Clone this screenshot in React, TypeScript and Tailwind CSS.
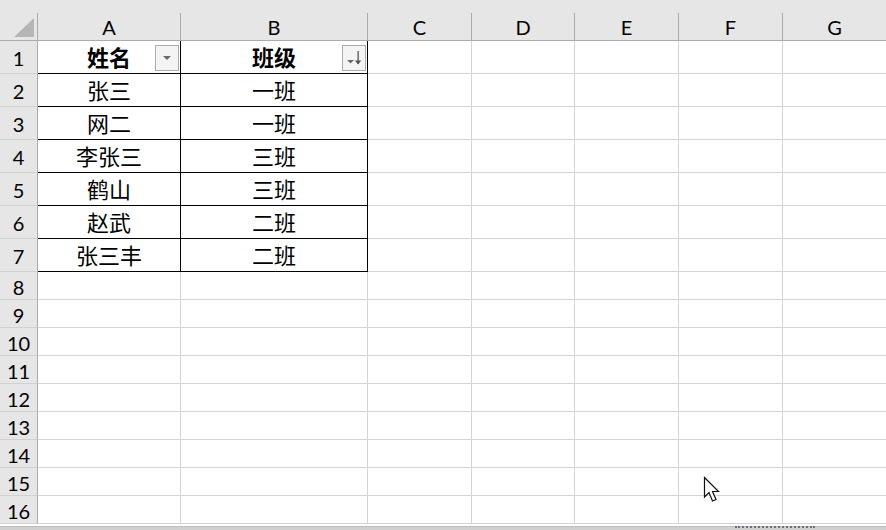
import React from "react";

const colW = ["w-[143px]", "w-[187px]", "w-[104px]", "w-[103px]", "w-[104px]", "w-[104px]", "flex-1"];
const letters = ["A", "B", "C", "D", "E", "F", "G"];

const data: [string, string][] = [
  ["张三", "一班"],
  ["网二", "一班"],
  ["李张三", "三班"],
  ["鹤山", "三班"],
  ["赵武", "二班"],
  ["张三丰", "二班"],
];

const cjk = { fontFamily: '"Noto Sans CJK SC", "Noto Sans", sans-serif' };
const lat = { fontFamily: 'Lato, "Liberation Sans", sans-serif' };

function FilterBtn({ sorted }: { sorted?: boolean }) {
  return (
    <div className="absolute right-[1px] top-[4px] w-[24px] h-[26px] border border-[#acacac] bg-[#f4f4f4] flex items-center justify-center">
      {sorted ? (
        <svg width="18" height="18" viewBox="0 0 18 18">
          <polygon points="2,11 9,11 5.5,14.5" fill="#6b6b6b" />
          <rect x="12.5" y="2" width="1.3" height="13" fill="#555" />
          <polygon points="10,11.5 16.3,11.5 13.15,15.5" fill="#555" />
        </svg>
      ) : (
        <svg width="10" height="6" viewBox="0 0 10 6">
          <polygon points="1,1 9,1 5,5" fill="#6b6b6b" />
        </svg>
      )}
    </div>
  );
}

export default function App() {
  const tallRows = 7;
  const shortRows = 9;
  return (
    <div className="relative w-[886px] h-[530px] overflow-hidden bg-white text-black">
      {/* top strip */}
      <div className="h-[13px] bg-[#e6e6e6]" />
      {/* column headers */}
      <div className="flex h-[28px] bg-[#e6e6e6] border-b border-[#ababab]" style={lat}>
        <div className="w-[38px] shrink-0 border-r border-[#ababab] relative">
          <svg className="absolute left-[14px] top-[5px]" width="20" height="19" viewBox="0 0 20 19">
            <polygon points="20,0 20,19 0,19" fill="#b6b6b6" />
          </svg>
        </div>
        {letters.map((l, i) => (
          <div
            key={l}
            className={`${colW[i]} shrink-0 ${i < 6 ? "border-r border-[#ababab]" : ""} flex items-center justify-center text-[20px] leading-none pt-[1px]`}
          >
            {l}
          </div>
        ))}
      </div>
      {/* rows */}
      {Array.from({ length: tallRows + shortRows }).map((_, r) => {
        const rowNo = r + 1;
        const tall = rowNo <= tallRows;
        const isTable = rowNo <= 7;
        return (
          <div key={rowNo} className={`flex ${tall ? "h-[33px]" : "h-[28px]"}`}>
            <div
              className="w-[38px] shrink-0 bg-[#e6e6e6] border-r border-b border-r-[#ababab] border-b-[#d0d0d0] flex items-center justify-center text-[20px] leading-none pt-[2px]"
              style={lat}
            >
              {rowNo}
            </div>
            {colW.map((w, c) => {
              const black = isTable && c < 2;
              let text = "";
              let bold = false;
              if (rowNo === 1 && c === 0) { text = "姓名"; bold = true; }
              if (rowNo === 1 && c === 1) { text = "班级"; bold = true; }
              if (rowNo >= 2 && rowNo <= 7 && c < 2) text = data[rowNo - 2][c];
              return (
                <div
                  key={c}
                  className={`${w} shrink-0 relative border-b ${c < 6 ? "border-r" : ""} ${
                    black ? "border-black" : "border-[#d4d4d4]"
                  } ${c === 1 && isTable ? "border-r-black" : ""} ${
                    c === 2 && isTable ? "border-b-[#d4d4d4]" : ""
                  } flex items-center justify-center text-[22px] leading-none pb-[3px] ${bold ? "font-bold" : ""}`}
                  style={cjk}
                >
                  {text}
                  {rowNo === 1 && c === 0 && <FilterBtn />}
                  {rowNo === 1 && c === 1 && <FilterBtn sorted />}
                </div>
              );
            })}
          </div>
        );
      })}
      {/* bottom scroll strip */}
      <div className="absolute left-0 right-0 bottom-0 h-[4px] bg-[#d0d0d0] border-t border-[#bdbdbd]" />
      <div className="absolute left-[735px] bottom-[2px] w-[80px] h-0 border-t-2 border-dotted border-[#6b7280]" />
      {/* cursor */}
      <svg className="absolute left-[703px] top-[476px]" width="22" height="30" viewBox="0 0 22 30">
        <path
          d="M1.5 1.5 L1.5 21 L6 16.5 L9.5 25 L13 23.5 L9.5 15.5 L15.5 15.5 Z"
          fill="white"
          stroke="#111"
          strokeWidth="1.2"
          strokeLinejoin="miter"
        />
      </svg>
    </div>
  );
}
